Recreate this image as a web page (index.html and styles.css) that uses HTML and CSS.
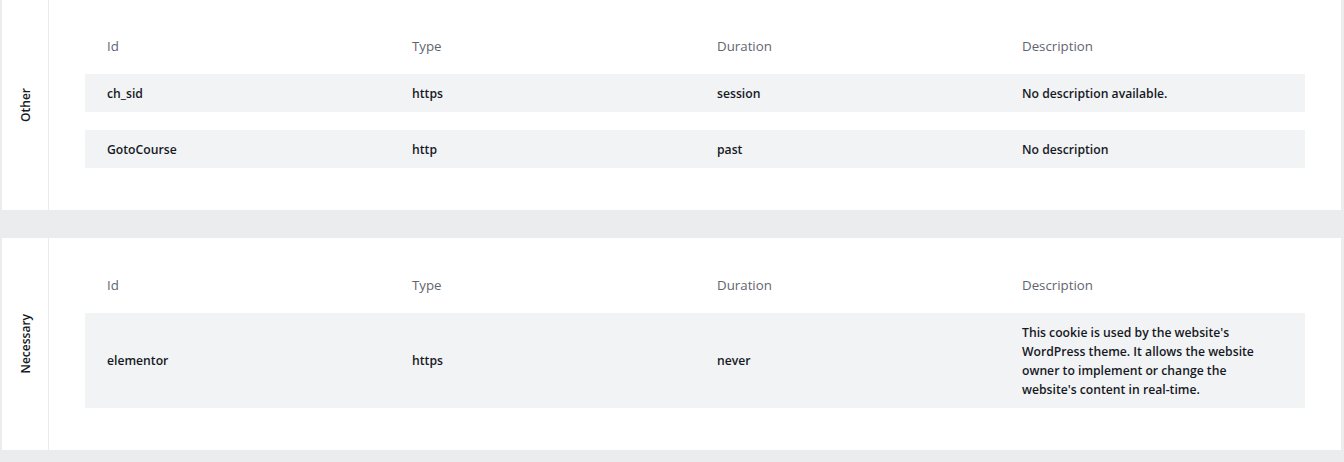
FILE: index.html
```html
<!DOCTYPE html>
<html lang="en">
<head>
<meta charset="utf-8">
<title>Cookies</title>
<link rel="stylesheet" href="styles.css">
</head>
<body>
<div class="page">
  <section class="card">
    <div class="label"><span>Other</span></div>
    <div class="table">
      <div class="row head">
        <div class="cell">Id</div><div class="cell">Type</div><div class="cell">Duration</div><div class="cell">Description</div>
      </div>
      <div class="row item">
        <div class="cell">ch_sid</div><div class="cell">https</div><div class="cell">session</div><div class="cell desc">No description available.</div>
      </div>
      <div class="row item">
        <div class="cell">GotoCourse</div><div class="cell">http</div><div class="cell">past</div><div class="cell desc">No description</div>
      </div>
    </div>
  </section>
  <section class="card">
    <div class="label"><span>Necessary</span></div>
    <div class="table">
      <div class="row head">
        <div class="cell">Id</div><div class="cell">Type</div><div class="cell">Duration</div><div class="cell">Description</div>
      </div>
      <div class="row item">
        <div class="cell">elementor</div><div class="cell">https</div><div class="cell">never</div><div class="cell desc">This cookie is used by the website's WordPress theme. It allows the website owner to implement or change the website's content in real-time.</div>
      </div>
    </div>
  </section>
</div>
</body>
</html>
```

FILE: styles.css
```css
html, body {
  margin: 0;
  padding: 0;
  background: #eaecee;
  font-family: "Open Sans", "Liberation Sans", sans-serif;
}

.page {
  display: flex;
  flex-direction: column;
  gap: 28px;
  padding: 0 3px 0 2px;
  margin-top: -1px;
}

.card {
  display: flex;
  background: #ffffff;
}

.label {
  width: 46px;
  flex: none;
  border-right: 1px solid #e9ebed;
  display: flex;
  align-items: center;
  justify-content: center;
}

.label span {
  writing-mode: vertical-rl;
  transform: rotate(180deg);
  font-size: 12px;
  font-weight: 600;
  color: #16191f;
}

.table {
  flex: 1;
  margin: 0 36px;
  padding: 33px 0 42px;
  display: flex;
  flex-direction: column;
  gap: 18px;
}

.row {
  display: grid;
  grid-template-columns: repeat(4, 1fr);
  align-items: center;
}

.head {
  height: 28px;
  margin-bottom: -4px;
  font-size: 13.3px;
  color: #5f6670;
}

.item {
  background: #f2f3f5;
  font-size: 12.2px;
  font-weight: 600;
  color: #16191f;
  line-height: 19px;
}

.cell {
  padding: 0 22px;
}

.item .cell {
  padding-top: 9.5px;
  padding-bottom: 9.5px;
}

.item .desc {
  padding-right: 30px;
}
```
